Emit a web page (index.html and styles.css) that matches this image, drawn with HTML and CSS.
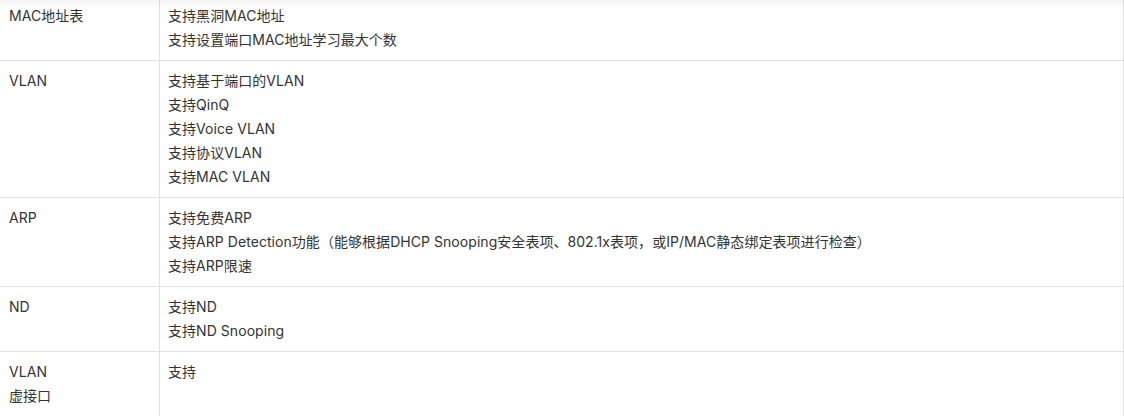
FILE: index.html
```html
<!DOCTYPE html>
<html lang="zh-CN">

<head>
    <meta charset="UTF-8">
    <meta name="viewport" content="width=device-width, initial-scale=1.0">
    <title>产品规格</title>
    <link rel="stylesheet" href="styles.css">
</head>

<body>
    <div class="top-shadow"></div>
    <div class="spec-wrap">
        <table class="spec-table">
            <tbody>
                <tr>
                    <td class="name">MAC地址表</td>
                    <td class="desc">支持黑洞MAC地址<br>支持设置端口MAC地址学习最大个数</td>
                </tr>
                <tr>
                    <td class="name">VLAN</td>
                    <td class="desc">支持基于端口的VLAN<br>支持QinQ<br>支持Voice VLAN<br>支持协议VLAN<br>支持MAC VLAN</td>
                </tr>
                <tr>
                    <td class="name">ARP</td>
                    <td class="desc">支持免费ARP<br>支持ARP Detection功能（能够根据DHCP Snooping安全表项、802.1x表项，或IP/MAC静态绑定表项进行检查）<br>支持ARP限速</td>
                </tr>
                <tr>
                    <td class="name">ND</td>
                    <td class="desc">支持ND<br>支持ND Snooping</td>
                </tr>
                <tr>
                    <td class="name">VLAN<br>虚接口</td>
                    <td class="desc">支持</td>
                </tr>
            </tbody>
        </table>
    </div>
</body>

</html>
```

FILE: styles.css
```css
body {
    font-family: Inter, "Noto Sans CJK SC", sans-serif;
    background-color: #ffffff;
    color: #333333;
    margin: 0;
    padding: 0;
    font-size: 14px;
    letter-spacing: 0.05px;
}

.top-shadow {
    position: fixed;
    top: 0;
    left: 0;
    right: 0;
    height: 10px;
    background: linear-gradient(to bottom, rgba(0, 0, 0, 0.04), rgba(0, 0, 0, 0));
    pointer-events: none;
}

.spec-wrap {
    overflow: hidden;
}

.spec-table {
    border-collapse: collapse;
    margin: -5px 0 0 -1px;
    width: calc(100% + 1px);
}

.spec-table td {
    border: 1px solid #e2e2e2;
    padding: 8px;
    line-height: 24px;
    vertical-align: top;
}

.spec-table .name {
    width: 142px;
    padding-left: 9px;
}
```
